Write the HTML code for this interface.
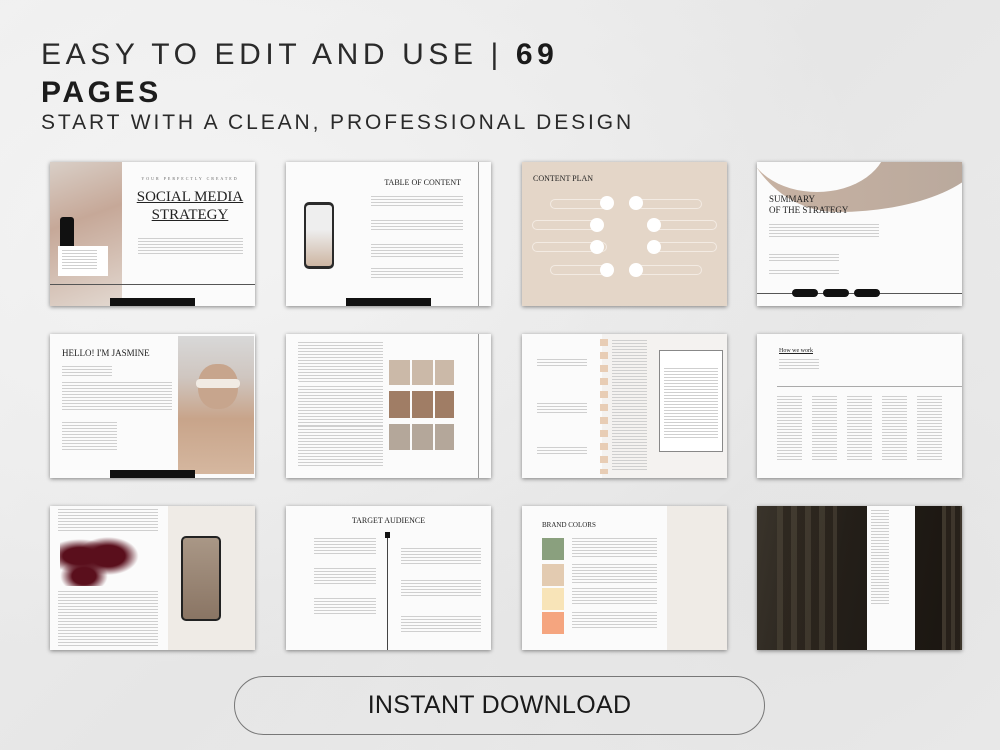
<!DOCTYPE html>
<html><head><meta charset="utf-8"><style>
*{margin:0;padding:0;box-sizing:border-box}
body{width:1000px;height:750px;overflow:hidden;position:relative;font-family:"Liberation Sans",sans-serif;
background:radial-gradient(ellipse at 20% 30%,#f3f3f3,transparent 60%),radial-gradient(ellipse at 80% 80%,#e4e4e4,transparent 55%),linear-gradient(135deg,#efefef,#e6e6e6 50%,#eeeeee);}
.h{position:absolute;left:41px;color:#1c1c1c;white-space:nowrap}
.s{position:absolute;width:205px;height:144px;background:#fbfbfb;box-shadow:0 1px 4px rgba(0,0,0,.45);overflow:hidden}
.a{position:absolute}
.t{position:absolute;background:repeating-linear-gradient(#cfcfcf 0 1px,transparent 1px 3px)}
.ser{font-family:"Liberation Serif",serif;color:#222}
.bar{position:absolute;background:#111}
</style></head><body>
<div class="h" style="top:38px;font-size:30px;letter-spacing:4.6px;color:#2a2a2a">EASY TO EDIT AND USE | <b style="color:#1a1a1a">69</b></div>
<div class="h" style="top:76px;font-size:30px;letter-spacing:3.6px;font-weight:bold">PAGES</div>
<div class="h" style="top:111px;font-size:21px;letter-spacing:2.9px;color:#2a2a2a">START WITH A CLEAN, PROFESSIONAL DESIGN</div>

<!-- Row 1 -->
<div class="s" style="left:50px;top:162px">
 <div class="a" style="left:0;top:0;width:72px;height:144px;background:linear-gradient(160deg,#d9cfc7,#c6a898 40%,#e2d8d0)"></div>
 <div class="a" style="left:10px;top:55px;width:14px;height:40px;background:#111;border-radius:3px"></div>
 <div class="a" style="left:8px;top:84px;width:50px;height:30px;background:#fff"></div>
 <div class="t" style="left:12px;top:88px;width:35px;height:20px"></div>
 <div class="a" style="left:0;top:122px;width:205px;height:1px;background:#555"></div>
 <div class="a ser" style="left:80px;top:14px;width:120px;font-size:4px;letter-spacing:2px;text-align:center;color:#666">YOUR PERFECTLY CREATED</div>
 <div class="a ser" style="left:80px;top:26px;width:120px;font-size:15px;text-align:center;text-decoration:underline;line-height:18px">SOCIAL MEDIA STRATEGY</div>
 <div class="t" style="left:88px;top:76px;width:105px;height:16px"></div>
 <div class="bar" style="left:60px;top:136px;width:85px;height:8px"></div>
</div>
<div class="s" style="left:286px;top:162px">
 <div class="a ser" style="left:90px;top:16px;width:85px;font-size:8px;text-align:right">TABLE OF CONTENT</div>
 <div class="a" style="left:18px;top:40px;width:30px;height:67px;background:#2a2a2a;border-radius:5px"></div>
 <div class="a" style="left:20px;top:43px;width:26px;height:61px;background:linear-gradient(#eee 40%,#cdb6a3);border-radius:3px"></div>
 <div class="t" style="left:85px;top:34px;width:92px;height:12px"></div>
 <div class="t" style="left:85px;top:58px;width:92px;height:12px"></div>
 <div class="t" style="left:85px;top:82px;width:92px;height:14px"></div>
 <div class="t" style="left:85px;top:106px;width:92px;height:12px"></div>
 <div class="a" style="left:192px;top:0;width:1px;height:144px;background:#999"></div>
 <div class="bar" style="left:60px;top:136px;width:85px;height:8px"></div>
</div>
<div class="s" style="left:522px;top:162px;background:#e4d6c8">
 <div class="a ser" style="left:11px;top:12px;font-size:8px">CONTENT PLAN</div>
 <div class="a" style="left:28px;top:37px;width:60px;height:10px;border:1px solid #f3ebe3;border-radius:6px"></div>
 <div class="a" style="left:10px;top:58px;width:70px;height:10px;border:1px solid #f3ebe3;border-radius:6px"></div>
 <div class="a" style="left:10px;top:80px;width:75px;height:10px;border:1px solid #f3ebe3;border-radius:6px"></div>
 <div class="a" style="left:28px;top:103px;width:60px;height:10px;border:1px solid #f3ebe3;border-radius:6px"></div>
 <div class="a" style="left:115px;top:37px;width:65px;height:10px;border:1px solid #f3ebe3;border-radius:6px"></div>
 <div class="a" style="left:125px;top:58px;width:70px;height:10px;border:1px solid #f3ebe3;border-radius:6px"></div>
 <div class="a" style="left:125px;top:80px;width:70px;height:10px;border:1px solid #f3ebe3;border-radius:6px"></div>
 <div class="a" style="left:115px;top:103px;width:65px;height:10px;border:1px solid #f3ebe3;border-radius:6px"></div>
 <div class="a" style="left:78px;top:34px;width:14px;height:14px;background:#fff;border-radius:50%"></div>
 <div class="a" style="left:68px;top:56px;width:14px;height:14px;background:#fff;border-radius:50%"></div>
 <div class="a" style="left:68px;top:78px;width:14px;height:14px;background:#fff;border-radius:50%"></div>
 <div class="a" style="left:78px;top:101px;width:14px;height:14px;background:#fff;border-radius:50%"></div>
 <div class="a" style="left:107px;top:34px;width:14px;height:14px;background:#fff;border-radius:50%"></div>
 <div class="a" style="left:125px;top:56px;width:14px;height:14px;background:#fff;border-radius:50%"></div>
 <div class="a" style="left:125px;top:78px;width:14px;height:14px;background:#fff;border-radius:50%"></div>
 <div class="a" style="left:107px;top:101px;width:14px;height:14px;background:#fff;border-radius:50%"></div>
</div>
<div class="s" style="left:757px;top:162px">
 <div class="a" style="left:-20px;top:-60px;width:250px;height:110px;background:linear-gradient(90deg,#c9b3a3,#b8a89c);border-radius:0 0 60% 40%/0 0 60% 100%"></div>
 <div class="a" style="left:-10px;top:-70px;width:140px;height:100px;background:#fbfbfb;border-radius:50%"></div>
 <div class="a ser" style="left:12px;top:32px;font-size:9px;line-height:11px">SUMMARY<br>OF THE STRATEGY</div>
 <div class="t" style="left:12px;top:62px;width:110px;height:14px"></div>
 <div class="t" style="left:12px;top:92px;width:70px;height:8px"></div>
 <div class="t" style="left:12px;top:108px;width:70px;height:6px"></div>
 <div class="a" style="left:0;top:131px;width:205px;height:1px;background:#555"></div>
 <div class="a" style="left:35px;top:127px;width:26px;height:8px;background:#111;border-radius:4px"></div>
 <div class="a" style="left:66px;top:127px;width:26px;height:8px;background:#111;border-radius:4px"></div>
 <div class="a" style="left:97px;top:127px;width:26px;height:8px;background:#111;border-radius:4px"></div>
</div>

<!-- Row 2 -->
<div class="s" style="left:50px;top:334px">
 <div class="a ser" style="left:12px;top:14px;font-size:9px">HELLO! I'M JASMINE</div>
 <div class="t" style="left:12px;top:32px;width:50px;height:10px"></div>
 <div class="t" style="left:12px;top:48px;width:110px;height:28px"></div>
 <div class="t" style="left:12px;top:88px;width:55px;height:28px"></div>
 <div class="a" style="left:128px;top:2px;width:76px;height:138px;background:linear-gradient(#d8d8d8 0,#cfc6c0 30%,#c8a48a 60%,#d5b79f)"></div>
 <div class="a" style="left:148px;top:30px;width:40px;height:45px;background:#c7a58d;border-radius:45%"></div>
 <div class="a" style="left:146px;top:45px;width:44px;height:9px;background:#f1ebe4;border-radius:4px"></div>
 <div class="bar" style="left:60px;top:136px;width:85px;height:8px"></div>
</div>
<div class="s" style="left:286px;top:334px">
 <div class="t" style="left:12px;top:8px;width:85px;height:40px"></div>
 <div class="t" style="left:12px;top:52px;width:85px;height:40px"></div>
 <div class="t" style="left:12px;top:92px;width:85px;height:42px"></div>
 <div class="a" style="left:103px;top:26px;width:65px;height:110px;background:
  linear-gradient(90deg,transparent 21px,#fbfbfb 21px 23px,transparent 23px 44px,#fbfbfb 44px 46px,transparent 46px),
  linear-gradient(#cbb9a8 0 25px,#fbfbfb 25px 31px,#a07d65 31px 58px,#fbfbfb 58px 64px,#b4a79a 64px 90px,#fbfbfb 90px)"></div>
 <div class="a" style="left:192px;top:0;width:1px;height:144px;background:#999"></div>
</div>
<div class="s" style="left:522px;top:334px">
 <div class="a" style="left:80px;top:0;width:125px;height:144px;background:#f4f2f0"></div>
 <div class="t" style="left:15px;top:25px;width:50px;height:8px"></div>
 <div class="t" style="left:15px;top:69px;width:50px;height:10px"></div>
 <div class="t" style="left:15px;top:113px;width:50px;height:8px"></div>
 <div class="a" style="left:78px;top:5px;width:8px;height:135px;background:repeating-linear-gradient(#e8cdb5 0 7px,transparent 7px 13px)"></div>
 <div class="t" style="left:90px;top:6px;width:35px;height:130px"></div>
 <div class="a" style="left:137px;top:16px;width:64px;height:102px;border:1px solid #888;background:#fff"></div>
 <div class="t" style="left:142px;top:34px;width:54px;height:70px"></div>
</div>
<div class="s" style="left:757px;top:334px">
 <div class="a ser" style="left:22px;top:14px;font-size:6px;text-decoration:underline">How we work</div>
 <div class="t" style="left:22px;top:25px;width:40px;height:10px"></div>
 <div class="a" style="left:20px;top:52px;width:185px;height:1px;background:#aaa"></div>
 <div class="t" style="left:20px;top:62px;width:175px;height:65px;-webkit-mask:repeating-linear-gradient(90deg,#000 0 25px,transparent 25px 35px)"></div>
</div>

<!-- Row 3 -->
<div class="s" style="left:50px;top:506px">
 <div class="a" style="left:118px;top:0;width:87px;height:144px;background:#efebe6"></div>
 <div class="t" style="left:8px;top:3px;width:100px;height:22px"></div>
 <div class="a" style="left:10px;top:30px;width:80px;height:50px;background:radial-gradient(ellipse at 25% 40%,#5a0f1c 20%,transparent 40%),radial-gradient(ellipse at 60% 40%,#5a0f1c 25%,transparent 45%),radial-gradient(ellipse at 30% 80%,#5a0f1c 15%,transparent 30%)"></div>
 <div class="t" style="left:8px;top:85px;width:100px;height:55px"></div>
 <div class="a" style="left:131px;top:30px;width:40px;height:85px;background:linear-gradient(#a99786,#8a7564);border:2px solid #222;border-radius:5px"></div>
</div>
<div class="s" style="left:286px;top:506px">
 <div class="a ser" style="left:0;top:10px;width:205px;text-align:center;font-size:8px">TARGET AUDIENCE</div>
 <div class="a" style="left:101px;top:28px;width:1px;height:116px;background:#444"></div>
 <div class="a" style="left:99px;top:26px;width:5px;height:6px;background:#111"></div>
 <div class="t" style="left:28px;top:32px;width:62px;height:16px"></div>
 <div class="t" style="left:28px;top:62px;width:62px;height:16px"></div>
 <div class="t" style="left:28px;top:92px;width:62px;height:16px"></div>
 <div class="t" style="left:115px;top:42px;width:80px;height:18px"></div>
 <div class="t" style="left:115px;top:74px;width:80px;height:18px"></div>
 <div class="t" style="left:115px;top:110px;width:80px;height:18px"></div>
</div>
<div class="s" style="left:522px;top:506px">
 <div class="a" style="left:145px;top:0;width:60px;height:144px;background:#efebe6"></div>
 <div class="a ser" style="left:20px;top:15px;font-size:7px">BRAND COLORS</div>
 <div class="a" style="left:20px;top:32px;width:22px;height:22px;background:#8aa07e"></div>
 <div class="a" style="left:20px;top:58px;width:22px;height:22px;background:#e3cbb1"></div>
 <div class="a" style="left:20px;top:82px;width:22px;height:22px;background:#f8e4b8"></div>
 <div class="a" style="left:20px;top:106px;width:22px;height:22px;background:#f5a57f"></div>
 <div class="t" style="left:50px;top:32px;width:85px;height:20px"></div>
 <div class="t" style="left:50px;top:58px;width:85px;height:20px"></div>
 <div class="t" style="left:50px;top:82px;width:85px;height:18px"></div>
 <div class="t" style="left:50px;top:106px;width:85px;height:16px"></div>
</div>
<div class="s" style="left:757px;top:506px;background:linear-gradient(100deg,#3a342b,#241f19 40%,#1a1510)">
 <div class="a" style="left:20px;top:0;width:60px;height:144px;background:repeating-linear-gradient(90deg,#4c4437 0 6px,#2c251d 6px 14px);opacity:.6"></div>
 <div class="a" style="left:110px;top:0;width:48px;height:144px;background:#fbfbfb"></div>
 <div class="t" style="left:114px;top:4px;width:18px;height:95px"></div>
 <div class="a" style="left:185px;top:0;width:20px;height:144px;background:repeating-linear-gradient(90deg,#4c4437 0 4px,#2c251d 4px 9px);opacity:.7"></div>
</div>

<div class="a" style="left:234px;top:676px;width:531px;height:59px;border:1px solid #777;border-radius:30px;text-align:center;line-height:57px;font-size:25px;color:#1a1a1a;letter-spacing:.3px">INSTANT DOWNLOAD</div>
</body></html>
